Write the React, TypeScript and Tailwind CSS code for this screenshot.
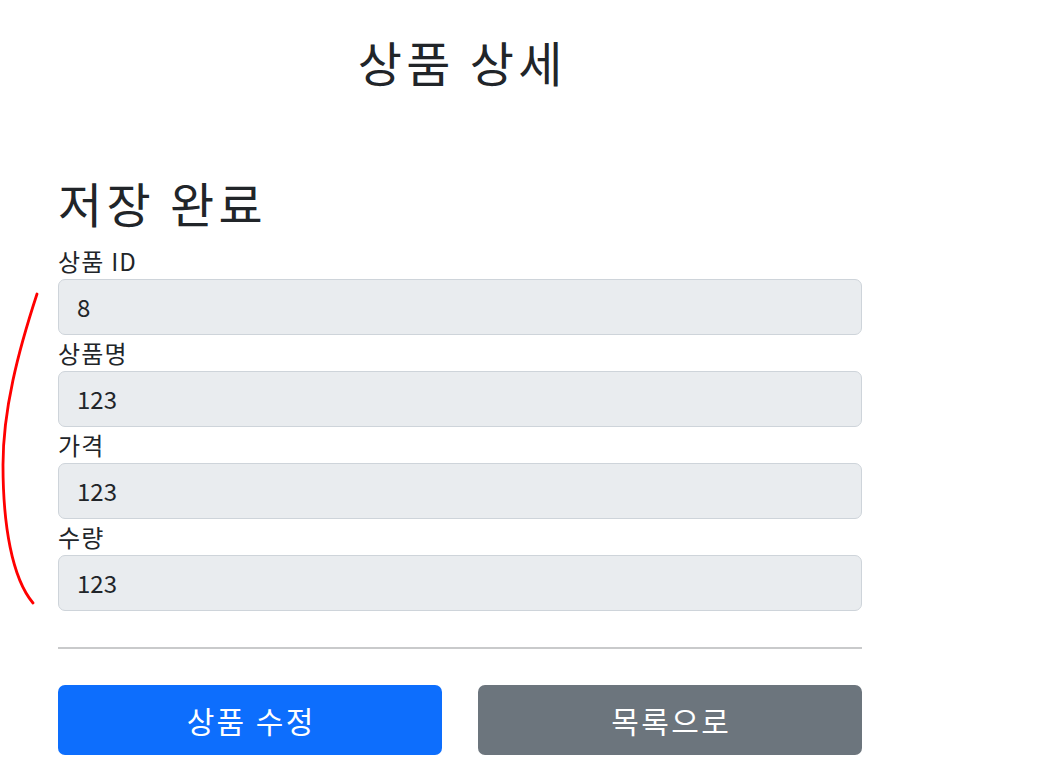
// 상품 상세 — 저장 완료 화면 (Bootstrap 스타일, 150% 배율)

const FONT = "font-['Noto_Sans_CJK_KR','Noto_Sans',sans-serif]";

const FIELDS = [
  { label: "상품 ID", value: "8" },
  { label: "상품명", value: "123" },
  { label: "가격", value: "123" },
  { label: "수량", value: "123" },
] as const;

export default function App() {
  return (
    <div className={`relative min-h-[776px] bg-white text-[#212529] ${FONT}`}>
      {/* 손으로 그린 빨간 표시 */}
      <svg
        className="absolute left-0 top-0 pointer-events-none"
        width="60"
        height="620"
        viewBox="0 0 60 620"
        fill="none"
        aria-hidden="true"
      >
        <path
          d="M37 294 C 18 352, 3 410, 3 465 C 3 525, 12 578, 33 603"
          stroke="#ff0000"
          strokeWidth="2.8"
          strokeLinecap="round"
        />
      </svg>

      <div className="ml-[58px] w-[804px]">
        {/* 제목 */}
        <div className="pt-[32px] text-center">
          <h2 className="text-[48px] leading-[58px] font-normal tracking-[0.09em] pl-[0.09em]">
            상품 상세
          </h2>
        </div>

        {/* 저장 완료 */}
        <h2 className="mt-[83px] mb-[12px] text-[48px] leading-[58px] font-normal tracking-[0.09em]">
          저장 완료
        </h2>

        {/* 입력 필드 */}
        <div className="flex flex-col">
          {FIELDS.map((field) => (
            <div key={field.label} className="flex flex-col">
              <label className="text-[24px] leading-[36px] tracking-[0.05em]">{field.label}</label>
              <div className="h-[56px] flex items-center px-[18px] rounded-[7px] border-[1.5px] border-[#ced4da] bg-[#e9ecef] text-[24px] leading-[36px]">
                {field.value}
              </div>
            </div>
          ))}
        </div>

        <div className="my-[36px] h-[2px] bg-[#c9cacb]" />

        {/* 버튼 */}
        <div className="grid grid-cols-2 gap-[36px]">
          <button
            type="button"
            className="h-[70px] rounded-[7px] bg-[#0d6efd] text-white text-[30px] leading-[45px] tracking-[0.08em] pl-[0.08em]"
          >
            상품 수정
          </button>
          <button
            type="button"
            className="h-[70px] rounded-[7px] bg-[#6c757d] text-white text-[30px] leading-[45px] tracking-[0.08em] pl-[0.08em]"
          >
            목록으로
          </button>
        </div>
      </div>
    </div>
  );
}
